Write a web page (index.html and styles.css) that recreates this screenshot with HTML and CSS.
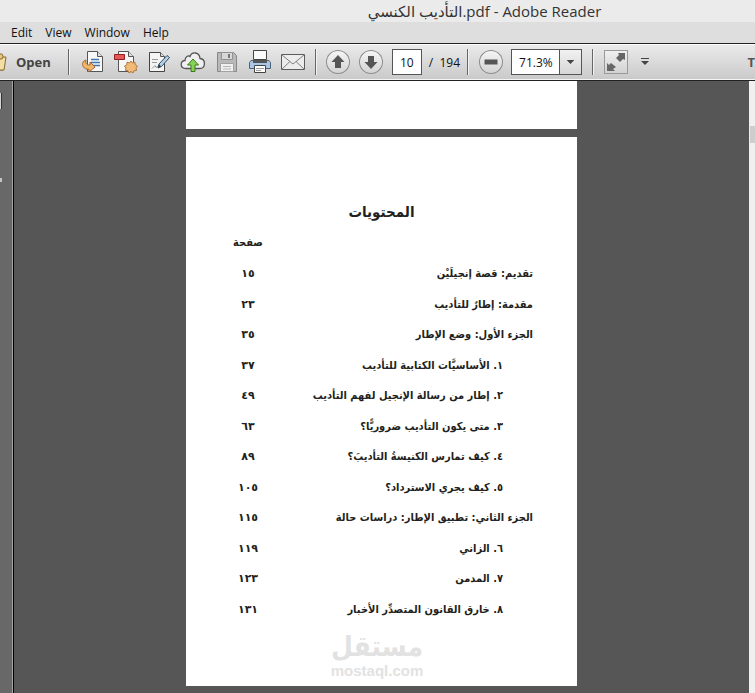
FILE: index.html
```html
<!DOCTYPE html>
<html lang="en">
<head>
  <meta charset="UTF-8">
  <title>التأديب الكنسي.pdf - Adobe Reader</title>
  <link rel="stylesheet" href="styles.css">
</head>
<body>

<header class="titlebar"><bdi dir="rtl">التأديب الكنسي</bdi>.pdf - Adobe Reader</header>

<nav class="menubar">
  <button>Edit</button>
  <button>View</button>
  <button>Window</button>
  <button>Help</button>
</nav>

<div class="toolbar">
  <button class="open">
    <svg width="8" height="22" viewBox="0 0 8 22"><path d="M-2 3h4l1 2v4h2l-2 10h-5z" fill="#e9c77b" stroke="#8a6a32"/><path d="M-2 8h4l1-2h3l-2 13h-6z" fill="#f3dfa6" stroke="#8a6a32"/></svg>
    Open
  </button>
  <span class="sep"></span>

  <div class="tools">
    <button aria-label="Convert">
      <svg width="24" height="24" viewBox="0 0 24 24"><path d="M6.500 1.500h10l5 5v15h-15z" fill="#f7f7f7" stroke="#555"/><path d="M16.500 1.500v5h5" fill="#ddd" stroke="#555"/><path d="M10 9.500h8M10 12.500h9M11 15.500h8" stroke="#3f78b5" stroke-width="1.500"/><path d="M5 10C0 11 0 19 8 19.500V22l6-5-5-5v3c-4 0-4.500-2-4-5z" fill="#f0b76c" stroke="#a5652a"/></svg>
    </button>
    <button aria-label="Create PDF">
      <svg width="24" height="24" viewBox="0 0 24 24"><path d="M4.500 1.500h10l5 5v15h-15z" fill="#f7f7f7" stroke="#555"/><path d="M14.500 1.500v5h5" fill="#ddd" stroke="#555"/><path d="M.5 4.500h10v5H.5z" fill="#e85858" stroke="#8f2020"/><path d="M17 11l1.500 2 2.500-.8.2 2.500 2.300 1.300-1.500 2 .6 2.400-2.600.3L19 23l-2-1.400-2 1.400-1-2.300-2.600-.3.600-2.400-1.500-2 2.300-1.300.2-2.500 2.500.8z" fill="#f3b976" stroke="#b17b42"/></svg>
    </button>
    <button aria-label="Sign">
      <svg width="24" height="24" viewBox="0 0 24 24"><path d="M2.500 2.500h11l4 4v15h-15z" fill="#f4f4f4" stroke="#444"/><path d="M13.500 2.500v4h4" fill="#ddd" stroke="#555"/><path d="M5 9.500h6M5 12.500h5M5 18.500l3-3 1 2 2-1" fill="none" stroke="#999"/><path d="M11 18l1-4 8-8.500 2.500 2-8 9z" fill="#b5d1e8" stroke="#354e66"/><path d="M11 18l1-4 2 2.500z" fill="#333"/></svg>
    </button>
    <button aria-label="Upload">
      <svg width="26" height="24" viewBox="0 0 26 24"><path d="M6 18.500C-.5 18.500 0 10.500 5 10.500 5 6.500 8.500 5 10 6.500 12 1 19.500 2 20 8.500c6 .5 6 10-.5 10z" fill="#efefef" stroke="#555" stroke-width="1.300"/><path d="M13 9l5.500 6H15v6.500h-4V15H7.500z" fill="#86d455" stroke="#3c7a1c"/></svg>
    </button>
    <button aria-label="Save" disabled>
      <svg width="24" height="24" viewBox="0 0 24 24"><path d="M2.500 2.500h16l3 3v16h-19z" fill="#b9b9b9" stroke="#888"/><path d="M6.500 2.500h11v7h-11z" fill="#d8d8d8" stroke="#929292"/><path d="M13 4h2v4h-2z" fill="#777"/><path d="M5.500 13.500h13v8h-13z" fill="#f0f0f0" stroke="#a2a2a2"/><path d="M8 16.500h8M8 19h8" stroke="#b5b5b5"/></svg>
    </button>
    <button aria-label="Print">
      <svg width="24" height="24" viewBox="0 0 24 24"><path d="M3 10.500h18l1.500 2v6h-21v-6z" fill="#a9c6e6" stroke="#4e6173"/><path d="M5.500.5h13v9h-13z" fill="#fafafa" stroke="#444"/><path d="M5 10h14v3H5z" fill="#555"/><path d="M6.500 15.500h11v7h-11z" fill="#fff" stroke="#444"/><path d="M8 18.500h8M8 20.500h5" stroke="#999"/></svg>
    </button>
    <button aria-label="E-mail">
      <svg width="24" height="24" viewBox="0 0 24 24"><path d="M.5 4.500h23v15H.5z" fill="#ececec" stroke="#5c5c5c"/><path d="M1 5l11 9L23 5M1 19l8-7.500M23 19l-8-7.500" fill="none" stroke="#808080"/></svg>
    </button>
  </div>
  <span class="sep"></span>

  <div class="pager">
    <button class="round" aria-label="Previous page">
      <svg width="24" height="24" viewBox="0 0 24 24"><path d="M12 5l6.500 7H15v6H9v-6H5.500z" fill="#555"/></svg>
    </button>
    <button class="round" aria-label="Next page">
      <svg width="24" height="24" viewBox="0 0 24 24"><path d="M12 19l-6.500-7H9V6h6v6h3.500z" fill="#555"/></svg>
    </button>
    <input class="page-no" type="text" value="10" aria-label="Page number">
  </div>
  <span class="total">/&nbsp; 194</span>
  <span class="sep"></span>

  <div class="zoom">
    <button class="round" aria-label="Zoom out">
      <svg width="24" height="24" viewBox="0 0 24 24"><path d="M5.500 9.500h13v5h-13z" fill="#555"/></svg>
    </button>
    <div class="zoom-box">
      <select class="zoom-level" aria-label="Zoom level"><option>71.3%</option></select>
      <svg class="zoom-arrow" width="22" height="24" viewBox="0 0 22 24"><path d="M7 10h8l-4 4z" fill="#444"/></svg>
    </div>
  </div>
  <span class="sep"></span>

  <button class="expand" aria-label="Full screen">
    <svg width="22" height="22" viewBox="0 0 22 22"><path d="M13 2h7v7l-2-1-3 3-4-4 3-3zM2 20v-8l2 2 2-2 5 4-3 2 2 2z" fill="#666"/></svg>
  </button>
  <button class="more" aria-label="More tools">
    <svg width="10" height="10" viewBox="0 0 10 10"><path d="M1 1h8v1H1zM1 4h8L5 8z" fill="#444"/></svg>
  </button>
  <button class="side-tab" aria-label="Tools">T</button>
</div>

<main class="viewer">
  <aside class="rail">
    <span class="rail-icon"></span>
    <span class="rail-grip"></span>
  </aside>

  <div class="canvas">
    <section class="sheet previous"></section>

    <section class="sheet contents" lang="ar" dir="rtl">
      <h1>المحتويات</h1>
      <table class="toc">
        <thead>
          <tr><th></th><th>صفحة</th></tr>
        </thead>
        <tbody>
          <tr><td>تقديم: قصة إنجيلَيْن</td><td>١٥</td></tr>
          <tr><td>مقدمة: إطارٌ للتأديب</td><td>٢٣</td></tr>
          <tr><td>الجزء الأول: وضع الإطار</td><td>٣٥</td></tr>
          <tr class="chapter"><td>١. الأساسيَّات الكتابية للتأديب</td><td>٣٧</td></tr>
          <tr class="chapter"><td>٢. إطار من رسالة الإنجيل لفهم التأديب</td><td>٤٩</td></tr>
          <tr class="chapter"><td>٣. متى يكون التأديب ضروريًّا؟</td><td>٦٣</td></tr>
          <tr class="chapter"><td>٤. كيف تمارس الكنيسةُ التأديبَ؟</td><td>٨٩</td></tr>
          <tr class="chapter"><td>٥. كيف يجري الاسترداد؟</td><td>١٠٥</td></tr>
          <tr><td>الجزء الثاني: تطبيق الإطار: دراسات حالة</td><td>١١٥</td></tr>
          <tr class="chapter"><td>٦. الزاني</td><td>١١٩</td></tr>
          <tr class="chapter"><td>٧. المدمن</td><td>١٢٣</td></tr>
          <tr class="chapter"><td>٨. خارق القانون المتصدِّر الأخبار</td><td>١٣١</td></tr>
        </tbody>
      </table>
      <div class="watermark">
        <span class="mark-ar">مستقل</span>
        <span class="mark-en" dir="ltr">mostaql.com</span>
      </div>
    </section>
  </div>

  <div class="scrollbar"><span class="thumb"></span></div>
</main>

</body>
</html>
```
FILE: styles.css
```css
* {
  box-sizing: border-box;
}
body {
  margin: 0;
  height: 100vh;
  display: flex;
  flex-direction: column;
  overflow: hidden;
  background: #565656;
  color: #222;
  font-family: "Open Sans", "Noto Sans", "DejaVu Sans", sans-serif;
  font-size: 12px;
}
button {
  padding: 0;
  border: 0;
  background: none;
  color: inherit;
  font: inherit;
}
svg {
  display: block;
}

/* window chrome */
.titlebar {
  height: 22px;
  padding-left: 214px;
  background: #ebebeb;
  color: #333;
  font-size: 15px;
  line-height: 22px;
  text-align: center;
  white-space: nowrap;
}
.menubar {
  display: flex;
  gap: 13px;
  height: 21px;
  padding-left: 11px;
  background: #dedede;
  color: #111;
}
.toolbar {
  display: flex;
  align-items: center;
  height: 38px;
  border-top: 1px solid #222;
  border-bottom: 1px solid #222;
  box-shadow: inset 0 1px #fff, inset 0 -1px #f4f4f4;
  background: linear-gradient(#ebebeb, #c9c9c9);
  overflow: hidden;
}
.toolbar > * {
  flex-shrink: 0;
}
.sep {
  width: 2px;
  height: 26px;
  background: #666;
  border-right: 1px solid #f2f2f2;
}
.open {
  display: flex;
  align-items: center;
  gap: 8px;
  margin-right: 17px;
  color: #444;
  font-size: 13px;
  font-weight: bold;
}
.tools {
  display: flex;
  gap: 9px;
  margin: 0 10px 0 11px;
}
.pager {
  display: flex;
  align-items: center;
  gap: 9px;
  margin-left: 9px;
}
.round {
  width: 24px;
  height: 24px;
  border-radius: 50%;
  background: linear-gradient(#f6f6f6, #d2d2d2);
  box-shadow: inset 0 0 0 1px #8c8c8c;
}
.page-no {
  width: 30px;
  height: 26px;
  padding: 0;
  border: 1px solid #555;
  background: #fff;
  color: #111;
  font: inherit;
  text-align: center;
}
.total {
  margin: 0 7px;
  color: #111;
}
.zoom {
  display: flex;
  align-items: center;
  gap: 8px;
  margin: 0 10px;
}
.zoom-box {
  position: relative;
}
.zoom-level {
  display: block;
  width: 71px;
  height: 26px;
  padding: 0 0 0 7px;
  border: 1px solid #555;
  border-radius: 0;
  appearance: none;
  background: #fff;
  color: #111;
  font: inherit;
}
.zoom-arrow {
  position: absolute;
  top: 1px;
  right: 1px;
  border-left: 1px solid #555;
  background: linear-gradient(#f2f2f2, #d6d6d6);
  pointer-events: none;
}
.expand {
  margin: 0 12px 0 10px;
  border: 1px solid #999;
  background: linear-gradient(#f0f0f0, #d2d2d2);
}
.side-tab {
  margin-left: auto;
  color: #555;
  font-size: 13px;
  font-weight: bold;
}

/* document area */
.viewer {
  flex: 1;
  display: flex;
  min-height: 0;
}
.rail {
  display: flex;
  flex-direction: column;
  align-items: flex-start;
  gap: 69px;
  width: 14px;
  padding-top: 12px;
  border-right: 1px solid #000;
  box-shadow: inset -1px 0 #a5a5a5;
  background: #686868;
}
.rail-icon {
  width: 2px;
  height: 16px;
  border-right: 1px solid #333;
  background: #d5d5d5;
}
.rail-grip {
  width: 2px;
  height: 4px;
  background: #c5c5c5;
}
.canvas {
  flex: 1;
  display: flex;
  flex-direction: column;
  align-items: center;
  gap: 8px;
}
.sheet {
  width: 391px;
  background: #fff;
}
.previous {
  height: 48px;
}
.contents {
  padding: 60px 44px 8px;
  color: #231f20;
  font-family: "DejaVu Sans Condensed", "DejaVu Sans", sans-serif;
}
.contents h1 {
  margin: 0;
  font-size: 15px;
  line-height: 30px;
  text-align: center;
}
.toc {
  width: 100%;
  border-collapse: collapse;
  font-size: 11px;
  font-weight: bold;
  line-height: 30px;
  white-space: nowrap;
}
.toc th,
.toc td {
  height: 30px;
  padding: 0;
}
.toc th {
  height: 32px;
}
.toc tbody tr:nth-child(even) td {
  height: 31px;
}
.toc th:last-child,
.toc td:last-child {
  width: 36px;
  text-align: center;
}
.toc td:last-child {
  font-family: "DejaVu Sans", sans-serif;
}
.toc .chapter td:first-child {
  padding-right: 30px;
}
.watermark {
  display: flex;
  flex-direction: column;
  align-items: center;
  margin-top: 6px;
  margin-right: 9px;
  color: #e2e2e2;
  font-weight: bold;
}
.mark-ar {
  font-size: 28px;
  line-height: 32px;
}
.mark-en {
  font-family: "Liberation Sans", sans-serif;
  font-size: 15px;
  line-height: 15px;
}
.scrollbar {
  width: 6px;
  padding: 45px 0 0 1px;
  background: #f0f0f0;
}
.thumb {
  display: block;
  height: 17px;
  background: #cdcdcd;
}
```
